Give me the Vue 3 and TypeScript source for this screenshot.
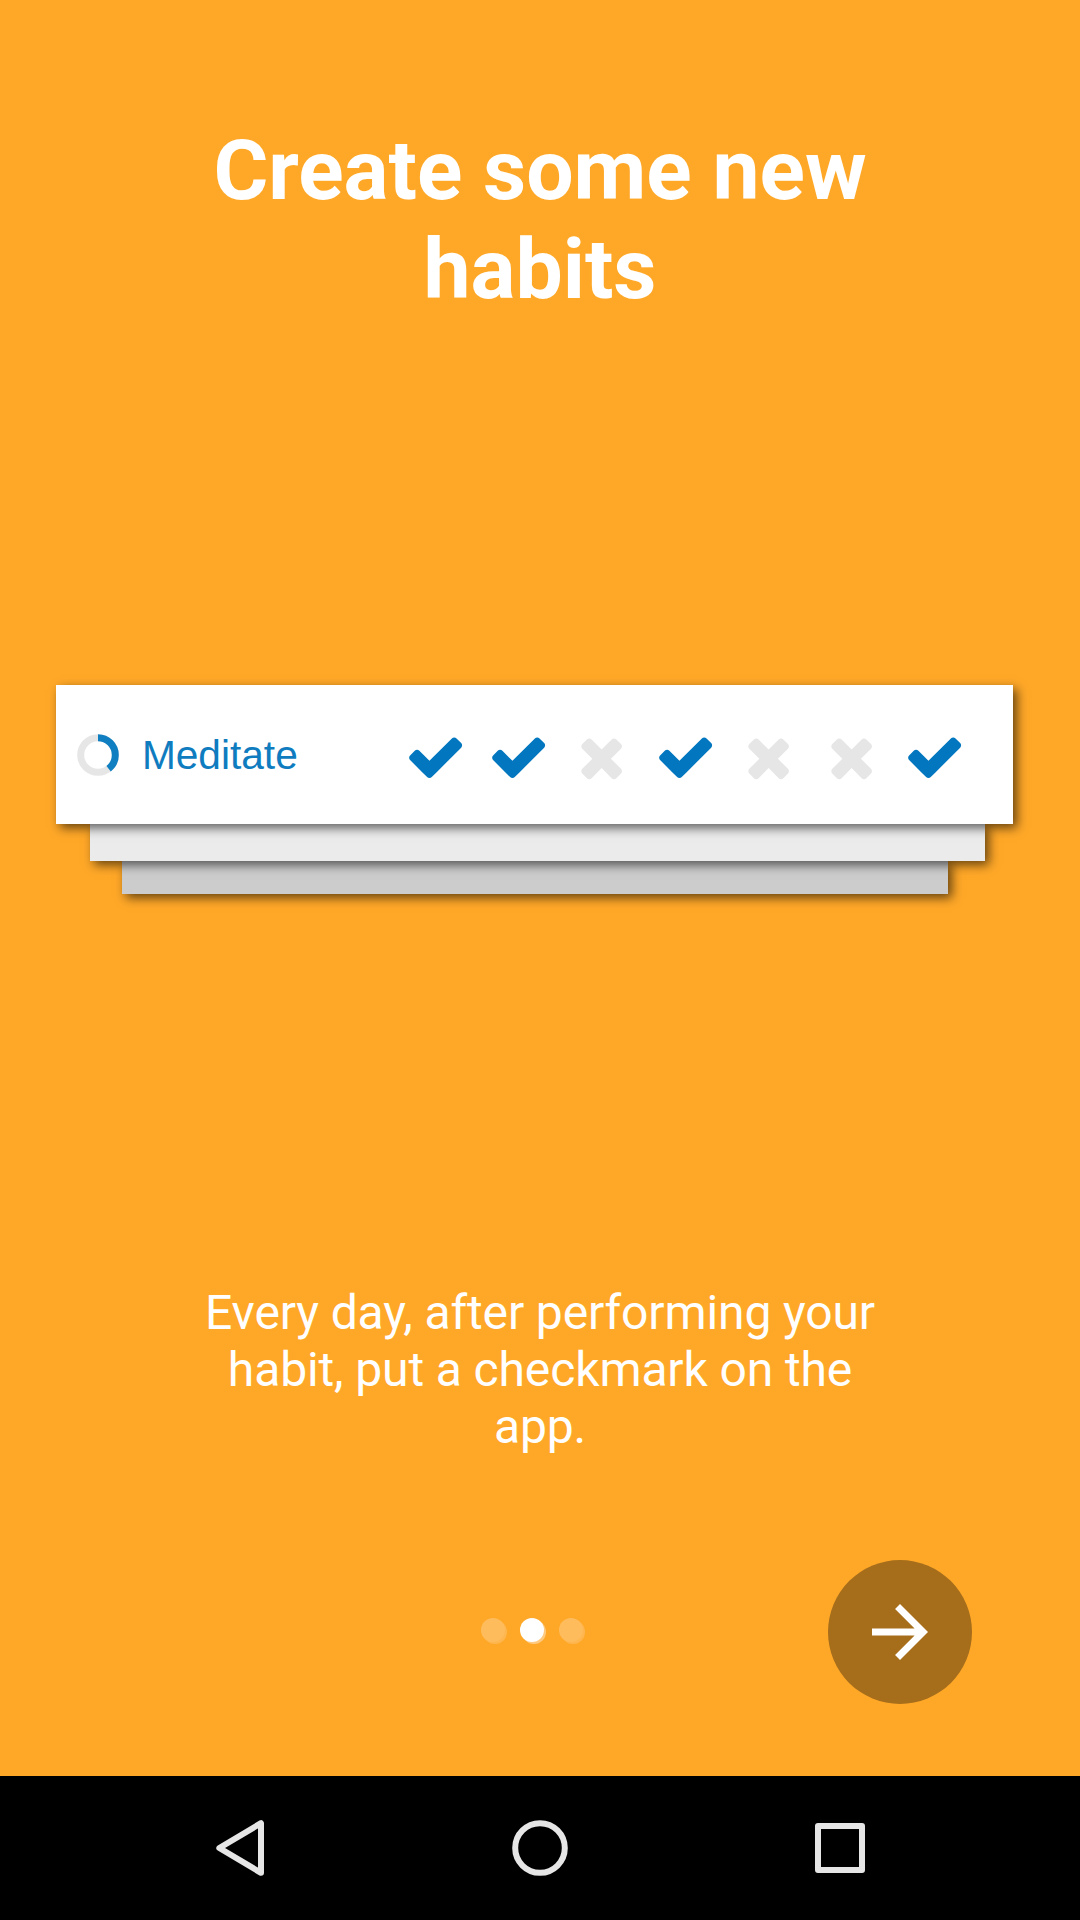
<script setup lang="ts">
const days: boolean[] = [true, true, false, true, false, false, true]
const pages = 3
const current = 1
</script>

<template>
  <div class="screen">
    <main class="slide">
      <h1 class="title">Create some new<br />habits</h1>

      <section class="stack">
        <div class="card">
          <svg class="ring" viewBox="0 0 42 42">
            <circle class="ring-track" cx="21" cy="21" r="17.3" />
            <circle
              class="ring-value"
              cx="21"
              cy="21"
              r="17.3"
              pathLength="360"
              stroke-dasharray="142 218"
              transform="rotate(-90 21 21)"
            />
          </svg>
          <span class="habit">Meditate</span>
          <div class="days">
            <svg v-for="(done, i) in days" :key="i" class="mark" :class="{ done }" viewBox="0 0 1792 1792">
              <path
                v-if="done"
                d="M1671 566q0 40-28 68l-724 724-136 136q-28 28-68 28t-68-28l-136-136-362-362q-28-28-28-68t28-68l136-136q28-28 68-28t68 28l294 295 656-657q28-28 68-28t68 28l136 136q28 28 28 68z"
              />
              <path
                v-else
                d="M1490 1322q0 40-28 68l-136 136q-28 28-68 28t-68-28l-294-294-294 294q-28 28-68 28t-68-28l-136-136q-28-28-28-68t28-68l294-294-294-294q-28-28-28-68t28-68l136-136q28-28 68-28t68 28l294 294 294-294q28-28 68-28t68 28l136 136q28 28 28 68t-28 68l-294 294 294 294q28 28 28 68z"
              />
            </svg>
          </div>
        </div>
        <div class="sheet middle"></div>
        <div class="sheet back"></div>
      </section>

      <p class="description">Every day, after performing your<br />habit, put a checkmark on the<br />app.</p>

      <footer class="controls">
        <div class="dots">
          <span v-for="n in pages" :key="n" class="dot" :class="{ active: n - 1 === current }"></span>
        </div>
        <button class="next" type="button" aria-label="Next">
          <svg viewBox="0 0 24 24" width="84" height="84">
            <path fill="#fff" d="M12 4l-1.41 1.41L16.17 11H4v2h12.17l-5.58 5.59L12 20l8-8z" />
          </svg>
        </button>
      </footer>
    </main>

    <nav class="navbar">
      <svg width="60" height="60" viewBox="0 0 60 60">
        <path d="M51 5.2V54.8L9.3 30Z" />
      </svg>
      <svg width="60" height="60" viewBox="0 0 60 60">
        <circle cx="30" cy="30" r="24.8" />
      </svg>
      <svg width="60" height="60" viewBox="0 0 60 60">
        <rect x="8" y="8" width="44" height="44" />
      </svg>
    </nav>
  </div>
</template>

<style>
body {
  margin: 0;
}
</style>

<style scoped>
.screen {
  display: flex;
  flex-direction: column;
  width: 1080px;
  height: 1920px;
  overflow: hidden;
  background: #ffa828;
  color: #fff;
  font-family: Roboto, "Liberation Sans", sans-serif;
}
.slide {
  display: flex;
  flex-direction: column;
  flex: 1;
}
.title {
  height: 198px;
  margin: 121px 0 0;
  font-size: 84px;
  font-weight: 700;
  line-height: 99px;
  letter-spacing: -0.03px;
  text-align: center;
}
.stack {
  display: flex;
  flex-direction: column;
  height: 209px;
  margin: 366px 0 0 56px;
}
.card {
  position: relative;
  z-index: 3;
  display: flex;
  align-items: center;
  box-sizing: border-box;
  width: 957px;
  height: 139px;
  padding-left: 21.3px;
  background: #fff;
  box-shadow: 4px 4px 10px rgba(0, 0, 0, 0.6);
}
.ring {
  flex: none;
  width: 42px;
  height: 42px;
}
.ring circle {
  fill: none;
  stroke-width: 7;
}
.ring .ring-track {
  stroke: #e6e6e6;
}
.ring .ring-value {
  stroke: #0f7fc1;
}
.habit {
  width: 200px;
  margin-left: 22.6px;
  color: #0f7cc0;
  font-family: "Liberation Sans", Arial, sans-serif;
  font-size: 40.65px;
  line-height: 46px;
}
.days {
  display: flex;
  gap: 21.99px;
  margin: 5px 0 0 63px;
}
.mark {
  flex: none;
  width: 61.28px;
  height: 61.28px;
  fill: #e6e6e6;
}
.mark.done {
  fill: #0277bf;
}
.sheet {
  position: relative;
  box-shadow: 4px 4px 10px rgba(0, 0, 0, 0.6);
}
.middle {
  z-index: 2;
  width: 895px;
  height: 37px;
  margin-left: 34px;
  background: #ebebeb;
}
.back {
  z-index: 1;
  width: 826px;
  height: 33px;
  margin-left: 66px;
  background: #ccc;
}
.description {
  height: 171px;
  margin: 390px 0 0;
  font-size: 48px;
  line-height: 57px;
  letter-spacing: -0.12px;
  text-align: center;
}
.controls {
  display: flex;
  align-items: center;
  justify-content: space-between;
  height: 144px;
  margin: 105px 108px 0 481px;
}
.dots {
  display: flex;
  gap: 15px;
  margin-top: -4px;
}
.dot {
  width: 24px;
  height: 24px;
  border-radius: 50%;
  background: #ffbc5c;
  box-shadow: 2px 2px 0 #ffb64f;
}
.dot.active {
  background: #fff;
  box-shadow: 2px 2px 0 #ffca80;
}
.next {
  display: flex;
  align-items: center;
  justify-content: center;
  width: 144px;
  height: 144px;
  padding: 0;
  border: 0;
  border-radius: 50%;
  background: rgba(0, 0, 0, 0.35);
}
.navbar {
  display: flex;
  align-items: center;
  justify-content: center;
  gap: 240px;
  height: 144px;
  background: #000;
}
.navbar svg {
  fill: none;
  stroke: #e6e6e6;
  stroke-width: 6;
  stroke-linejoin: round;
}
</style>
